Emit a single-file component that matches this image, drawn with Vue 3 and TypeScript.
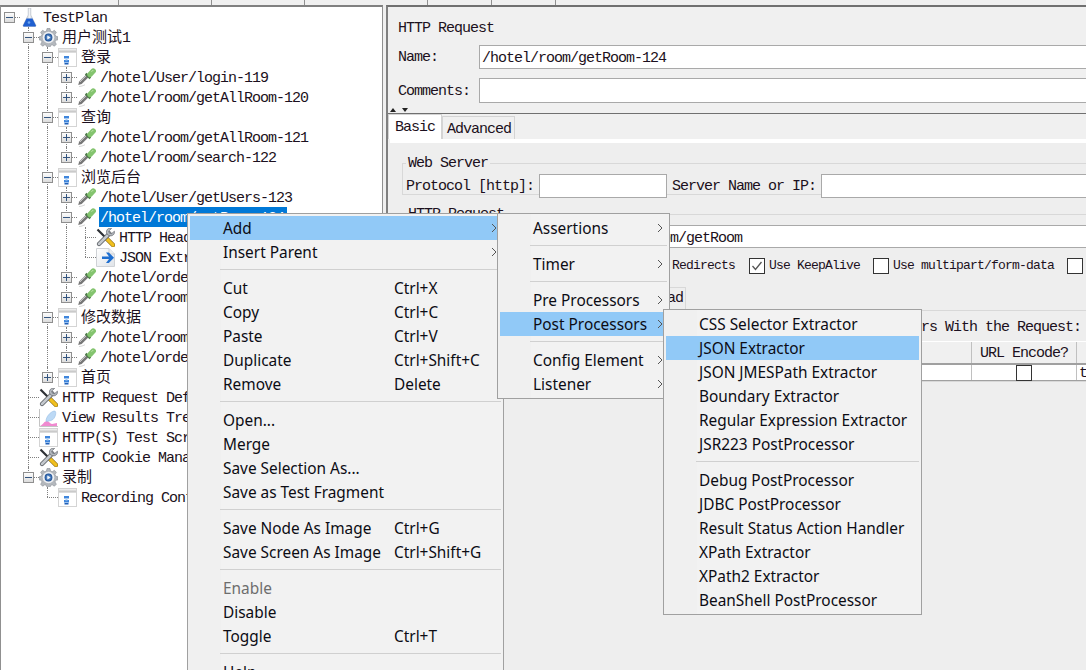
<script setup lang="ts">
import { computed } from 'vue'

type IconName = 'flask' | 'gear' | 'group' | 'pipette' | 'tools' | 'extract' | 'chart'

interface TreeNode {
  label: string
  icon: IconName
  open?: boolean
  selected?: boolean
  children?: TreeNode[]
}

interface TreeRow {
  label: string
  icon: IconName
  selected: boolean
  hasToggle: boolean
  open: boolean
  isLast: boolean
  level: number
  guides: boolean[]
  cjk: boolean
}

interface MenuEntry {
  label?: string
  shortcut?: string
  more?: boolean
  active?: boolean
  disabled?: boolean
}

function sampler(label: string, extra: Partial<TreeNode> = {}): TreeNode {
  return { label, icon: 'pipette', children: [], ...extra }
}

const testPlan: TreeNode = {
  label: 'TestPlan',
  icon: 'flask',
  open: true,
  children: [
    {
      label: '用户测试1',
      icon: 'gear',
      open: true,
      children: [
        {
          label: '登录',
          icon: 'group',
          open: true,
          children: [sampler('/hotel/User/login-119'), sampler('/hotel/room/getAllRoom-120')],
        },
        {
          label: '查询',
          icon: 'group',
          open: true,
          children: [sampler('/hotel/room/getAllRoom-121'), sampler('/hotel/room/search-122')],
        },
        {
          label: '浏览后台',
          icon: 'group',
          open: true,
          children: [
            sampler('/hotel/User/getUsers-123'),
            sampler('/hotel/room/getRoom-124', {
              open: true,
              selected: true,
              children: [
                { label: 'HTTP Header Manager', icon: 'tools' },
                { label: 'JSON Extractor', icon: 'extract' },
              ],
            }),
            sampler('/hotel/order/getOrder-125'),
            sampler('/hotel/room/getRoom-126'),
          ],
        },
        {
          label: '修改数据',
          icon: 'group',
          open: true,
          children: [sampler('/hotel/room/update-127'), sampler('/hotel/order/update-128')],
        },
        { label: '首页', icon: 'group', children: [] },
      ],
    },
    { label: 'HTTP Request Defaults', icon: 'tools' },
    { label: 'View Results Tree', icon: 'chart' },
    { label: 'HTTP(S) Test Script Recorder', icon: 'group' },
    { label: 'HTTP Cookie Manager', icon: 'tools' },
    {
      label: '录制',
      icon: 'gear',
      open: true,
      children: [{ label: 'Recording Controller', icon: 'group' }],
    },
  ],
}

function flatten(node: TreeNode, level: number, guides: boolean[], isLast: boolean): TreeRow[] {
  const row: TreeRow = {
    label: node.label,
    icon: node.icon,
    selected: !!node.selected,
    hasToggle: !!node.children,
    open: !!node.open,
    isLast,
    level,
    guides,
    cjk: /[^\x00-\x7f]/.test(node.label),
  }
  if (!node.open || !node.children) return [row]
  const kids = node.children
  const rows = [row]
  kids.forEach((kid, i) => {
    rows.push(...flatten(kid, level + 1, [...guides, !isLast], i === kids.length - 1))
  })
  return rows
}

const rows = computed(() => flatten(testPlan, 0, [], true))

const sep: MenuEntry = {}

const addMenu: MenuEntry[] = [
  { label: 'Add', more: true, active: true },
  { label: 'Insert Parent', more: true },
  sep,
  { label: 'Cut', shortcut: 'Ctrl+X' },
  { label: 'Copy', shortcut: 'Ctrl+C' },
  { label: 'Paste', shortcut: 'Ctrl+V' },
  { label: 'Duplicate', shortcut: 'Ctrl+Shift+C' },
  { label: 'Remove', shortcut: 'Delete' },
  sep,
  { label: 'Open...' },
  { label: 'Merge' },
  { label: 'Save Selection As...' },
  { label: 'Save as Test Fragment' },
  sep,
  { label: 'Save Node As Image', shortcut: 'Ctrl+G' },
  { label: 'Save Screen As Image', shortcut: 'Ctrl+Shift+G' },
  sep,
  { label: 'Enable', disabled: true },
  { label: 'Disable' },
  { label: 'Toggle', shortcut: 'Ctrl+T' },
  sep,
  { label: 'Help' },
]

const elementMenu: MenuEntry[] = [
  { label: 'Assertions', more: true },
  sep,
  { label: 'Timer', more: true },
  sep,
  { label: 'Pre Processors', more: true },
  { label: 'Post Processors', more: true, active: true },
  sep,
  { label: 'Config Element', more: true },
  { label: 'Listener', more: true },
]

const postMenu: MenuEntry[] = [
  { label: 'CSS Selector Extractor' },
  { label: 'JSON Extractor', active: true },
  { label: 'JSON JMESPath Extractor' },
  { label: 'Boundary Extractor' },
  { label: 'Regular Expression Extractor' },
  { label: 'JSR223 PostProcessor' },
  sep,
  { label: 'Debug PostProcessor' },
  { label: 'JDBC PostProcessor' },
  { label: 'Result Status Action Handler' },
  { label: 'XPath Extractor' },
  { label: 'XPath2 Extractor' },
  { label: 'BeanShell PostProcessor' },
]

const menus = [
  { key: 'add', entries: addMenu },
  { key: 'element', entries: elementMenu },
  { key: 'post', entries: postMenu },
]
</script>

<template>
  <div class="jmeter">
    <svg class="sprite" aria-hidden="true">
      <defs>
        <linearGradient id="glass" x1="0" x2="1" y1="0" y2="0">
          <stop offset="0" stop-color="#8d97a8" />
          <stop offset="0.5" stop-color="#f2f4f7" />
          <stop offset="1" stop-color="#9aa3b2" />
        </linearGradient>
        <radialGradient id="hub" cx="0.5" cy="0.5" r="0.5">
          <stop offset="0" stop-color="#7fb0e8" />
          <stop offset="1" stop-color="#1d4f94" />
        </radialGradient>
        <linearGradient id="bar" x1="0" x2="0" y1="0" y2="1">
          <stop offset="0" stop-color="#f4f4f4" />
          <stop offset="1" stop-color="#b9b9b9" />
        </linearGradient>
        <linearGradient id="page" x1="0" x2="1" y1="0" y2="1">
          <stop offset="0" stop-color="#fff" />
          <stop offset="1" stop-color="#dfe3e8" />
        </linearGradient>
        <symbol id="i-flask" viewBox="0 0 19 19">
          <path d="M8.200 0h2.600v7l5 10a1 1 0 0 1-1 1.500H4.200a1 1 0 0 1-1-1.500l5-10z" fill="url(#glass)" stroke="#a6aebb" stroke-width=".5" />
          <path d="M6.600 10.500h5.800l3.300 6.700a.8.800 0 0 1-.8 1.300H4.100a.8.800 0 0 1-.8-1.300z" fill="#1f5fd0" />
          <circle cx="9" cy="14.500" r="1.300" fill="#6fa6ee" />
        </symbol>
        <symbol id="i-gear" viewBox="0 0 19 19">
          <path
            d="M8 .5h3l.5 2.500 1.700.7 2.200-1.400 2 2-1.400 2.200.7 1.700 2.300.6v3l-2.300.5-.7 1.700 1.400 2.200-2 2-2.200-1.400-1.700.7-.5 2.300H8l-.5-2.300-1.700-.7-2.200 1.400-2-2 1.400-2.200-.7-1.700-2.300-.5v-3l2.300-.6.700-1.700-1.400-2.200 2-2 2.200 1.400 1.700-.7z"
            fill="#b4b8bd"
            stroke="#8a8f96"
            stroke-width=".6"
          />
          <circle cx="9.500" cy="9.500" r="5.800" fill="#eef0f3" />
          <circle cx="9.500" cy="9.500" r="3.900" fill="url(#hub)" />
          <path d="M8.300 7.500l3.200 2-3.200 2z" fill="#f4f7fb" />
        </symbol>
        <symbol id="i-group" viewBox="0 0 19 19">
          <rect x=".5" y=".5" width="18" height="18" fill="#fff" stroke="#d4d4d4" />
          <rect x="1" y="1" width="17" height="3.500" fill="url(#bar)" />
          <rect x="6" y="8" width="5" height="2.500" fill="#3f86dc" />
          <rect x="6" y="12" width="5" height="2.500" fill="#3f86dc" />
          <rect x="7.500" y="10" width="2" height="2.500" fill="#a9cbf0" />
          <rect x="6.500" y="15" width="4" height="1.500" fill="#1f5fb8" />
        </symbol>
        <symbol id="i-pipette" viewBox="0 0 19 19">
          <path d="M2 18.600c2-.2 4-.8 6-1.800" stroke="#d8d8d8" stroke-width="1" fill="none" />
          <path d="M1.200 17l1-3.500 6.800-6.800 2.500 2.500-6.800 6.800z" fill="#777" />
          <path d="M2.800 14l6.300-6.300" stroke="#dadada" stroke-width="1" />
          <path d="M8.700 5.700l4.600 4.600" stroke="#4d7a4a" stroke-width="2.400" />
          <path d="M13 6.500l3.200-3.500" stroke="#84c46f" stroke-width="5.400" stroke-linecap="round" />
          <path d="M14.400 3.500c.5-.6 1.200-1 1.900-.9" stroke="#c6e9b4" stroke-width="1" fill="none" />
        </symbol>
        <symbol id="i-tools" viewBox="0 0 19 19">
          <path d="M1.500 1.500l8.500 8.500" stroke="#2e3136" stroke-width="2.200" />
          <path d="M10 10l7 7" stroke="#7a5a08" stroke-width="4.400" stroke-linecap="round" />
          <path d="M10 10l7 7" stroke="#f0c020" stroke-width="3.200" stroke-linecap="round" />
          <path d="M3 16L13.500 5.500" stroke="#54585e" stroke-width="4.200" stroke-linecap="round" />
          <path d="M3 16L13.500 5.500" stroke="#c4c8cd" stroke-width="2.800" stroke-linecap="round" />
          <path
            d="M18.400 3.200l-2.900 2.500-2.200-.6-.5-2.100L15.600.4c-2.200-.8-4.700.4-5.100 2.700-.4 2.300 1 3.800 2.600 4.500 2.900 1 6.100-1.300 5.300-4.400z"
            fill="#b6bbc1"
            stroke="#54585e"
            stroke-width=".6"
          />
        </symbol>
        <symbol id="i-extract" viewBox="0 0 19 19">
          <path d="M.5.500h12.500l5.500 5.500v12.500H.500z" fill="url(#page)" stroke="#cfd2d6" />
          <path d="M13 .5V6h5.500" fill="#eceef0" stroke="#cfd2d6" />
          <path d="M10 4.500h2.800L18 9.700l-5.200 5.200H10l3-4H6V8.500h7z" fill="#1f6fd0" />
        </symbol>
        <symbol id="i-chart" viewBox="0 0 19 19">
          <path d="M.5 1v17.500H19" stroke="#c4c4c4" fill="none" />
          <path d="M1 18c3-1 4-5 7-5 2 0 3 3 5 3 2 0 3-1 5-1v3z" fill="#f08ad0" />
          <path d="M7 13c0-4 4-9 8-10 2-.5 2 2 1.500 4-.5 2-2 5-4.500 5.500-2 .4-5 1.500-5 .5z" fill="#bcd9f5" stroke="#8db7e0" stroke-width=".5" />
        </symbol>
      </defs>
    </svg>

    <div class="top-strip">
      <span class="strip-cell first" />
      <span class="strip-cell wide" />
      <span class="strip-cell wide" />
      <span class="strip-cell bridge" />
      <span class="strip-cell" />
      <span class="strip-cell" />
    </div>

    <div class="workspace">
      <div class="tree-pane">
        <div v-for="row in rows" :key="row.label" class="tree-row">
          <span v-for="(on, i) in row.guides" :key="i" class="guide" :class="{ on }" />
          <span class="branch" :class="{ root: row.level === 0, last: row.isLast }">
            <span v-if="row.hasToggle" class="toggle" :class="{ open: row.open }" />
          </span>
          <svg class="node-icon"><use :href="`#i-${row.icon}`" /></svg>
          <span class="node-label" :class="{ selected: row.selected, cjk: row.cjk }">{{ row.label }}</span>
        </div>
      </div>

      <div class="editor-pane">
        <div class="editor-head">
          <div class="editor-title">HTTP Request</div>
          <label class="field-row name-row">
            <span class="field-label">Name:</span>
            <span class="text-box">/hotel/room/getRoom-124</span>
          </label>
          <label class="field-row comment-row">
            <span class="field-label">Comments:</span>
            <span class="text-box" />
          </label>
        </div>

        <div class="split-bar">
          <span class="arrow up" />
          <span class="arrow down" />
        </div>

        <div class="tabs">
          <span class="tab current">Basic</span>
          <span class="tab">Advanced</span>
        </div>

        <div class="tab-body">
          <fieldset class="group web-server">
            <legend>Web Server</legend>
            <div class="server-row">
              <span>Protocol [http]:</span>
              <span class="text-box protocol" />
              <span class="server-label">Server Name or IP:</span>
              <span class="text-box server" />
            </div>
          </fieldset>

          <fieldset class="group http-request">
            <legend>HTTP Request</legend>
            <div class="path-row">
              <span class="text-box path">/hotel/room/getRoom</span>
            </div>
            <div class="option-row">
              <span class="redirects">Follow Redirects</span>
              <span class="check checked">
                <svg viewBox="0 0 14 14"><path d="M2.500 7l3 3.500 6-7.500" fill="none" stroke="#555" stroke-width="1.300" /></svg>
              </span>
              <span class="option-text">Use KeepAlive</span>
              <span class="check gap-before" />
              <span class="option-text">Use multipart/form-data</span>
              <span class="check gap-before" />
            </div>
            <div class="inner-tabs">
              <span class="inner-tab">Files Upload</span>
            </div>
            <div class="send-line">Send Parameters With the Request:</div>
            <div class="param-table">
              <div class="param-head">
                <span class="col-value">Value</span>
                <span class="col-encode">URL Encode?</span>
              </div>
              <div class="param-row">
                <span class="col-value" />
                <span class="col-encode"><span class="check" /></span>
                <span class="col-type">t</span>
              </div>
            </div>
          </fieldset>
        </div>
      </div>
    </div>

    <div v-for="menu in menus" :key="menu.key" class="popup" :class="`popup-${menu.key}`">
      <template v-for="(entry, i) in menu.entries" :key="i">
        <div v-if="!entry.label" class="menu-sep" />
        <div v-else class="menu-item" :class="{ active: entry.active, disabled: entry.disabled }">
          <span class="menu-label">{{ entry.label }}</span>
          <span v-if="entry.shortcut" class="menu-shortcut">{{ entry.shortcut }}</span>
          <svg v-if="entry.more" class="menu-more" viewBox="0 0 6 10">
            <path d="M1 1l4 4-4 4" fill="none" stroke="#555" stroke-width="1" />
          </svg>
        </div>
      </template>
    </div>
  </div>
</template>

<style>
html,
body {
  margin: 0;
  background: #f0f0f0;
}
</style>

<style scoped>
.jmeter {
  position: relative;
  width: 1086px;
  height: 670px;
  overflow: hidden;
  background: #f0f0f0;
  font: 15px/22px 'Liberation Mono', 'Noto Sans CJK SC', monospace;
  letter-spacing: -1px;
  color: #1c1020;
}

.sprite {
  position: absolute;
  width: 0;
  height: 0;
}

.top-strip {
  display: flex;
  height: 5px;

  .strip-cell {
    flex: 0 0 64px;
    box-sizing: border-box;
    border-right: 1px solid #909090;
  }

  .strip-cell.first {
    flex-basis: 119px;
  }

  .strip-cell.wide {
    flex-basis: 93px;
  }

  .strip-cell.bridge {
    flex-basis: 123px;
  }
}

.workspace {
  display: flex;
  height: 665px;
}

.tree-pane {
  flex: 0 0 383px;
  box-sizing: border-box;
  background: #fff;
  border-top: 2px solid #808080;
  border-left: 1px solid #909090;
  border-right: 1px solid #909090;
  margin-right: 3px;
}

.tree-row {
  display: flex;
  align-items: center;
  height: 20px;
  margin-left: -1px;
  white-space: nowrap;

  .guide {
    position: relative;
    flex: 0 0 19px;
    align-self: stretch;

    &.on::before {
      content: '';
      position: absolute;
      left: 9px;
      top: 0;
      bottom: 0;
      border-left: 1px dotted #808080;
    }
  }

  .branch {
    position: relative;
    flex: 0 0 20px;
    align-self: stretch;

    &::before {
      content: '';
      position: absolute;
      left: 9px;
      top: 0;
      bottom: 0;
      border-left: 1px dotted #808080;
    }

    &.last::before {
      bottom: 10px;
    }

    &.root::before {
      display: none;
    }

    &::after {
      content: '';
      position: absolute;
      left: 9px;
      right: 0;
      top: 10px;
      border-top: 1px dotted #808080;
    }
  }

  .toggle {
    position: absolute;
    z-index: 1;
    left: 4px;
    top: 5px;
    width: 11px;
    height: 11px;
    box-sizing: border-box;
    border: 1px solid #8f8f8f;
    background: linear-gradient(#fdfdfd, #dcdcdc);

    &::before {
      content: '';
      position: absolute;
      left: 1px;
      top: 4px;
      width: 7px;
      height: 1px;
      background: #34557f;
    }

    &:not(.open)::after {
      content: '';
      position: absolute;
      left: 4px;
      top: 1px;
      width: 1px;
      height: 7px;
      background: #34557f;
    }
  }

  .node-icon {
    flex: 0 0 19px;
    width: 19px;
    height: 19px;
  }

  .node-label {
    height: 20px;
    margin-left: 3px;
    padding: 0 1px;
    line-height: 24px;
  }

  .node-label.cjk {
    letter-spacing: 0;
  }

  .node-label.selected {
    padding-right: 3px;
    background: #0078d7;
    color: #fff;
  }
}

.editor-pane {
  flex: 0 0 710px;
  border-top: 2px solid #707070;
  border-left: 2px solid #808080;
  overflow: hidden;
}

.editor-head {
  padding: 11px 0 0 10px;
}

.editor-title {
  height: 20px;
}

.field-row {
  display: flex;
  align-items: center;
}

.field-label {
  flex: 0 0 81px;
  padding-top: 2px;
}

.text-box {
  display: block;
  box-sizing: border-box;
  height: 24px;
  padding-left: 2px;
  line-height: 25px;
  background: #fff;
  border: 1px solid #a9a9a9;
}

.field-row .text-box {
  flex: 1;
}

.name-row {
  margin-top: 7px;
}

.comment-row {
  margin-top: 9px;

  .text-box {
    height: 25px;
  }
}

.split-bar {
  position: relative;
  height: 10px;
  border-bottom: 1px solid #707070;

  .arrow {
    position: absolute;
    top: 5px;
    border-left: 3px solid transparent;
    border-right: 3px solid transparent;
  }

  .up {
    left: 2px;
    border-bottom: 4px solid #222;
  }

  .down {
    left: 14px;
    border-top: 4px solid #222;
  }
}

.tabs {
  display: flex;
  align-items: flex-end;
  height: 25px;
  padding-top: 1px;
  box-sizing: border-box;

  .tab {
    height: 22px;
    padding: 0 3px 0 4px;
    line-height: 26px;
    border: 1px solid #d4d4d4;
    border-bottom: 0;
  }

  .tab.current {
    height: 24px;
    padding: 0 6px;
    line-height: 26px;
    background: #fff;
  }
}

.tab-body {
  height: 540px;
  margin-left: 2px;
  padding: 12px 0 0 12px;
  background: #eee;
  border-top: 4px solid #fff;
}

.group {
  margin: 0;
  padding: 0 0 0 3px;
  border: 1px solid #d8d8d8;
  border-right: 0;

  legend {
    margin-left: 0;
    padding: 0 2px;
    height: 16px;
    line-height: 18px;
  }
}

.web-server {
  height: 40px;
  box-sizing: border-box;
}

.server-row {
  display: flex;
  align-items: center;
  height: 24px;
  margin-top: 3px;

  > span:first-child {
    padding-top: 2px;
  }

  .protocol {
    flex: 0 0 128px;
    margin-left: 5px;
  }

  .server-label {
    margin: 0 5px;
    padding-top: 2px;
  }

  .server {
    flex: 1;
  }
}

.http-request {
  margin-top: 11px;
  padding-left: 0;

  legend {
    margin-left: 3px;
  }
}

.path-row {
  margin-top: 3px;

  .path {
    height: 23px;
    padding-left: 186px;
  }
}

.option-row {
  display: flex;
  align-items: center;
  height: 20px;
  margin-top: 8px;
  font-size: 13px;
  letter-spacing: -0.8px;

  .redirects {
    flex: 0 0 332px;
    text-align: right;
  }

  .check.checked {
    margin-left: 14px;
  }

  .option-text {
    margin-left: 4px;
  }

  .gap-before {
    margin-left: 13px;
  }
}

.check {
  display: inline-block;
  flex: 0 0 16px;
  box-sizing: border-box;
  width: 16px;
  height: 16px;
  background: #fff;
  border: 1px solid #333;

  svg {
    display: block;
    width: 14px;
    height: 14px;
  }
}

.inner-tabs {
  display: flex;
  height: 23px;
  margin-top: 11px;
  border-bottom: 1px solid #d8d8d8;

  .inner-tab {
    margin-left: 181px;
    padding: 0 2px;
    line-height: 22px;
    border: 1px solid #d8d8d8;
    border-bottom: 0;
  }
}

.send-line {
  height: 20px;
  margin-top: 6px;
  padding-left: 414px;
}

.param-table {
  margin-top: 4px;

  .param-head,
  .param-row {
    display: flex;
  }

  .param-head {
    height: 21px;
    line-height: 23px;
    background: #f0f0f0;
    border-top: 1px solid #fff;
    border-bottom: 2px solid #a0a0a0;
  }

  .param-row {
    height: 15px;
    line-height: 17px;
    background: #fff;
    border-bottom: 1px solid #a0a0a0;
  }

  .col-value {
    flex: 0 0 568px;
  }

  .col-encode {
    display: flex;
    justify-content: center;
    flex: 0 0 104px;
    border-left: 1px solid #c0c0c0;
    border-right: 1px solid #c0c0c0;
  }

  .col-type {
    padding-left: 2px;
  }
}

.popup {
  position: absolute;
  box-sizing: border-box;
  padding: 2px;
  background: linear-gradient(to right, #f0f0f0 33px, #f2f2f2 33px);
  border: 1px solid #a0a0a0;
  font: 15.4px/25px 'Noto Sans', sans-serif;
  letter-spacing: 0;
  color: #0c0c14;
}

.popup-add {
  left: 187px;
  top: 213px;
  width: 317px;
  height: 480px;
}

.popup-element {
  left: 497px;
  top: 213px;
  width: 173px;
  height: 186px;
}

.popup-post {
  left: 663px;
  top: 309px;
  width: 259px;
  height: 306px;
}

.menu-item {
  position: relative;
  display: flex;
  height: 24px;
  padding-left: 33px;
  white-space: nowrap;

  &.active {
    background: #91c9f7;
  }

  &.disabled {
    color: #6d6d6d;
  }

  .menu-label {
    flex: 0 0 171px;
  }

  .menu-more {
    position: absolute;
    right: 4px;
    top: 7px;
    width: 6px;
    height: 10px;
  }
}

.menu-sep {
  height: 12px;
  box-sizing: border-box;
  margin-left: 30px;
  padding-top: 5px;

  &::before {
    content: '';
    display: block;
    height: 1px;
    background: #d0d0d0;
  }
}
</style>
